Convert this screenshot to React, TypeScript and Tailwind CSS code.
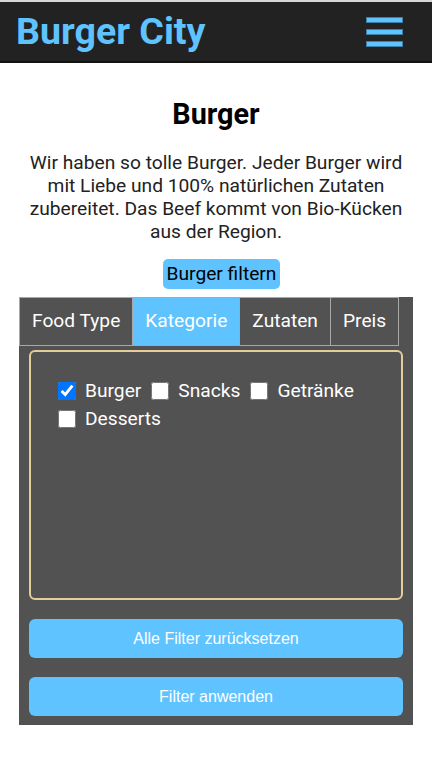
import React, { useState } from 'react';

const tabs = ['Food Type', 'Kategorie', 'Zutaten', 'Preis'];
const categories = ['Burger', 'Snacks', 'Getränke', 'Desserts'];

const App: React.FC = () => {
    const [activeTab, setActiveTab] = useState('Kategorie');
    const [checked, setChecked] = useState<string[]>(['Burger']);

    const toggle = (c: string) => {
        setChecked(prev => prev.includes(c) ? prev.filter(x => x !== c) : [...prev, c]);
    };

    return (
        <div className="min-h-[757px] bg-white font-['Roboto',sans-serif]">
            {/* Header */}
            <header className="h-[63px] bg-[#222222] border-t-2 border-t-[#d8d8d8] border-b-2 border-b-[#111111] flex items-center justify-between pl-4 pr-[29px]">
                <h1 className="text-[37.6px] font-bold text-[#5fc3ff] leading-none">Burger City</h1>
                <button className="flex flex-col gap-[6px]">
                    <span className="block w-[37px] h-[6px] bg-[#5fc3ff] border border-[#3d7fa6]"></span>
                    <span className="block w-[37px] h-[6px] bg-[#5fc3ff] border border-[#3d7fa6]"></span>
                    <span className="block w-[37px] h-[6px] bg-[#5fc3ff] border border-[#3d7fa6]"></span>
                </button>
            </header>

            <main className="flex flex-col items-center">
                <h2 className="mt-[34px] text-[28.8px] font-bold text-black leading-[34px]">Burger</h2>
                <p className="mt-[20px] px-[24px] text-center text-[19.2px] leading-[23px] text-[#222222]">
                    Wir haben so tolle Burger. Jeder Burger wird mit Liebe und 100% natürlichen Zutaten zubereitet. Das Beef kommt von Bio-Kücken aus der Region.
                </p>

                <button className="mt-[16px] ml-[11px] h-[30px] px-[4px] rounded-[5px] bg-[#5fc3ff] text-[19.2px] text-black">
                    Burger filtern
                </button>

                {/* Filter panel */}
                <div className="mt-[8px] w-[394px] bg-[#525252] pb-[9px]">
                    <div className="flex">
                        {tabs.map(t => (
                            <button
                                key={t}
                                onClick={() => setActiveTab(t)}
                                className={`h-[49px] px-[12px] border border-[#a8a8a8] -ml-px first:ml-0 text-[19.2px] text-white ${activeTab === t ? 'bg-[#5fc3ff]' : 'bg-[#525252]'}`}
                            >
                                {t}
                            </button>
                        ))}
                    </div>

                    <div className="mx-[10px] mt-[4px] h-[250px] rounded-[6px] border-2 border-[#e6cb9c] px-[27px] pt-[28px]">
                        <div className="flex flex-wrap gap-x-[10px] gap-y-[6px]">
                            {categories.map(c => (
                                <label key={c} className="flex items-center gap-[9px] text-[19.2px] text-white leading-[22px]">
                                    <input
                                        type="checkbox"
                                        checked={checked.includes(c)}
                                        onChange={() => toggle(c)}
                                        className="w-[18px] h-[18px] m-0"
                                    />
                                    {c}
                                </label>
                            ))}
                        </div>
                    </div>

                    <div className="mx-[10px] mt-[19px] flex flex-col gap-[19px] font-['Liberation_Sans',Arial,sans-serif]">
                        <button className="h-[39px] rounded-[6px] bg-[#5fc3ff] text-[16px] text-white">Alle Filter zurücksetzen</button>
                        <button className="h-[39px] rounded-[6px] bg-[#5fc3ff] text-[16px] text-white">Filter anwenden</button>
                    </div>
                </div>
            </main>
        </div>
    );
};

export default App;
